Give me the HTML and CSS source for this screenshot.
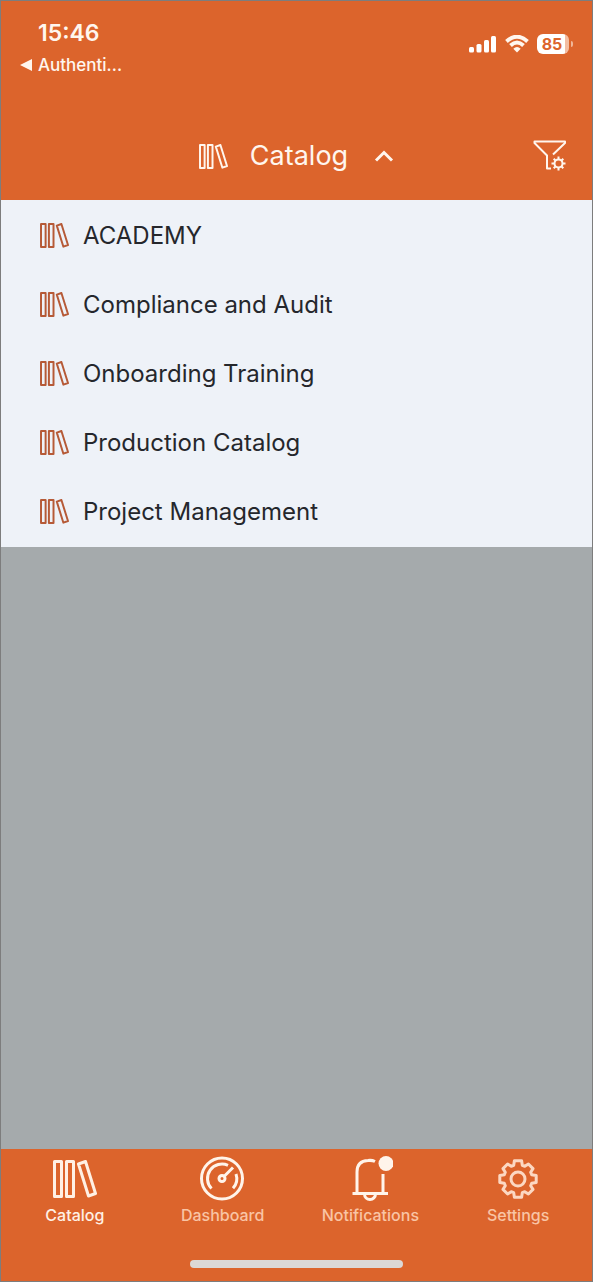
FILE: index.html
```html
<!DOCTYPE html>
<html lang="en">
<head>
<meta charset="utf-8">
<meta name="viewport" content="width=device-width, initial-scale=1">
<title>Catalog</title>
<link rel="stylesheet" href="styles.css">
</head>
<body>
<svg class="sprite" aria-hidden="true">
  <symbol id="books" viewBox="0 0 44 38">
    <path d="M1.500 1.500h7v35h-7zM13.500 1.500h7v35h-7zM25.500 4L32.500 1.500L42.500 33.500L35.500 36z"/>
  </symbol>
  <symbol id="gear" viewBox="0 0 40 40">
    <path d="M16.400 1.800H23.600L24.300 6.300L26.800 7.300L30.400 5L35 9.600L32.700 13.200L33.700 15.700L38.200 16.400V23.600L33.700 24.300L32.700 26.800L35 30.400L30.400 35L26.800 32.700L24.300 33.700L23.600 38.200H16.400L15.700 33.700L13.200 32.700L9.600 35L5 30.400L7.300 26.800L6.300 24.300L1.800 23.600V16.400L6.300 15.700L7.300 13.200L5 9.600L9.600 5L13.200 7.300L15.700 6.300Z"/>
    <circle cx="20" cy="20" r="7"/>
  </symbol>
</svg>
<div class="app">
  <header class="header">
    <div class="status">
      <div class="status-left">
        <time class="clock">15:46</time>
        <a class="back" href="#"><svg class="back-arrow" viewBox="0 0 12 12" aria-hidden="true"><path d="M0 6L12 0V12Z"/></svg>Authenti...</a>
      </div>
      <div class="status-right">
        <svg class="signal" viewBox="0 0 28 18" role="img" aria-label="Signal">
          <rect x="0" y="12" width="5" height="5.500" rx="1.500"/><rect x="7.500" y="9" width="5" height="8.500" rx="1.500"/><rect x="15" y="5" width="5" height="12.500" rx="1.500"/><rect x="22" y="1" width="5" height="16.500" rx="1.500"/>
        </svg>
        <svg class="wifi" viewBox="0 0 24 18" role="img" aria-label="Wi-Fi">
          <path d="M1.500 6.500Q12 -3 22.500 6.500M5.500 10.500Q12 4.500 18.500 10.500"/><path class="solid" d="M8.300 13.700Q12 10.300 15.700 13.700L12 17.500Z"/>
        </svg>
        <div class="battery"><span class="battery-level">85</span></div>
      </div>
    </div>
    <div class="titlebar">
      <button class="title" type="button" aria-expanded="true" aria-controls="catalogs">
        <svg class="icon" aria-hidden="true"><use href="#books"/></svg>
        <span>Catalog</span>
        <svg class="chevron" viewBox="0 0 20 14" aria-hidden="true"><path d="M2 11.500L10 3.500L18 11.500"/></svg>
      </button>
      <button class="filter" type="button" aria-label="Filter settings">
        <svg class="funnel" viewBox="0 0 34 32" aria-hidden="true">
          <path d="M18 28.500H14V15.500L1.500 3V1.500H32V3L20 14.500"/>
          <circle cx="25.500" cy="23.500" r="4"/>
          <path d="M25.500 19.500V16.500M25.500 27.500V30.500M21.500 23.500H18.500M29.500 23.500H32.500M22.700 20.700L20.700 18.700M28.300 20.700L30.300 18.700M22.700 26.300L20.700 28.300M28.300 26.300L30.300 28.300"/>
        </svg>
      </button>
    </div>
  </header>
  <ul class="catalogs" id="catalogs">
    <li><button class="catalog" type="button"><svg class="icon" aria-hidden="true"><use href="#books"/></svg>ACADEMY</button></li>
    <li><button class="catalog" type="button"><svg class="icon" aria-hidden="true"><use href="#books"/></svg>Compliance and Audit</button></li>
    <li><button class="catalog" type="button"><svg class="icon" aria-hidden="true"><use href="#books"/></svg>Onboarding Training</button></li>
    <li><button class="catalog" type="button"><svg class="icon" aria-hidden="true"><use href="#books"/></svg>Production Catalog</button></li>
    <li><button class="catalog" type="button"><svg class="icon" aria-hidden="true"><use href="#books"/></svg>Project Management</button></li>
  </ul>
  <main class="backdrop"></main>
  <footer class="footer">
    <nav class="tabs">
      <a class="tab active" href="#" aria-current="page"><svg class="tab-icon tab-books" aria-hidden="true"><use href="#books"/></svg>Catalog</a>
      <a class="tab" href="#"><svg class="tab-icon bright" viewBox="0 0 46 46" aria-hidden="true"><circle cx="22" cy="22.500" r="20.500"/><path d="M11.500 32.500A14.500 14.500 0 0 1 28 9.300M36 18A14.500 14.500 0 0 1 33 32.300M24.500 20L33 11.500"/><circle cx="22" cy="22.500" r="3"/></svg>Dashboard</a>
      <a class="tab" href="#"><svg class="tab-icon bright" viewBox="0 0 46 46" aria-hidden="true"><path d="M10 37.500V16Q10 5 21 4.500Q25 4 28 5.500M36 18V37.500M5.500 37.500H41M17.500 38A5.500 5.500 0 0 0 28.500 38"/><circle class="solid" cx="39" cy="7.500" r="7.500"/></svg>Notifications</a>
      <a class="tab" href="#"><svg class="tab-icon tab-gear" aria-hidden="true"><use href="#gear"/></svg>Settings</a>
    </nav>
    <div class="home-bar"></div>
  </footer>
</div>
</body>
</html>
```
FILE: styles.css
```css
* { box-sizing: border-box; }

body {
  margin: 0;
  font-family: Inter, "Liberation Sans", sans-serif;
}

button {
  border: 0;
  padding: 0;
  background: none;
  color: inherit;
  font: inherit;
  cursor: pointer;
}

a { color: inherit; text-decoration: none; }

svg {
  display: block;
  flex: none;
  fill: none;
  stroke: currentColor;
  stroke-linejoin: round;
}

.sprite { position: absolute; width: 0; height: 0; }

.app {
  display: flex;
  flex-direction: column;
  min-height: 100vh;
  border: 1px solid #7d7d7d;
}

.header {
  padding-top: 18px;
  background: #dc642c;
  color: #fff6ee;
}

.status {
  display: flex;
  justify-content: space-between;
  align-items: flex-start;
  padding: 0 19px;
}

.clock {
  display: block;
  padding-left: 18px;
  font-size: 23px;
  font-weight: 600;
  line-height: 28px;
}

.back {
  display: flex;
  align-items: center;
  gap: 6px;
  padding-top: 5px;
  font-size: 17px;
  font-weight: 500;
  line-height: 26px;
}

.back-arrow { width: 12px; height: 12px; fill: currentColor; stroke: none; }

.status-right {
  display: flex;
  align-items: center;
  gap: 8px;
  padding-top: 15px;
}

.signal { width: 28px; height: 18px; fill: #fff; stroke: none; }
.wifi { width: 24px; height: 18px; stroke-width: 4; }
.solid { fill: currentColor; stroke: none; }

.battery {
  display: flex;
  align-items: center;
  gap: 2px;
}

.battery::after {
  content: "";
  width: 2px;
  height: 6px;
  border-radius: 0 2px 2px 0;
  background: #f0b799;
}

.battery-level {
  width: 32px;
  padding-right: 2px;
  border-radius: 6px;
  background: linear-gradient(to right, #fff 86%, #f3bda4 86%);
  color: #dc642c;
  font-size: 16px;
  font-weight: 700;
  line-height: 20px;
  text-align: center;
}

.titlebar {
  display: grid;
  grid-template-columns: 1fr auto 1fr;
  align-items: center;
  padding: 55px 25px 21px;
}

.title {
  display: flex;
  grid-column: 2;
  align-items: center;
  gap: 22px;
  font-size: 27px;
  line-height: 46px;
}

.icon {
  width: 29px;
  height: 25px;
  stroke-width: 3;
}

.chevron { width: 20px; height: 14px; margin-left: 4px; stroke-width: 3; stroke-linejoin: miter; }

.filter { justify-self: end; }
.funnel { width: 34px; height: 32px; stroke-width: 2; }

.catalogs {
  display: grid;
  margin: 0;
  padding: 1px 0;
  list-style: none;
  background: #eef2f8;
}

.catalog {
  display: flex;
  align-items: center;
  gap: 14px;
  width: 100%;
  padding: 0 39px;
  color: #25272c;
  font-size: 24px;
  line-height: 69px;
  text-align: left;
}

.catalog .icon { color: #b65a37; }

.backdrop { flex: 1; background: #a5aaac; }

.footer {
  padding: 7px 0 13px;
  background: #dc642c;
}

.tabs { display: grid; grid-template-columns: repeat(4, 1fr); }

.tab {
  display: flex;
  flex-direction: column;
  align-items: center;
  color: #f9c4a5;
  font-size: 16px;
  font-weight: 500;
  line-height: 26px;
}

.active { color: #fff0e4; }

.tab-icon { width: 46px; height: 46px; stroke-width: 3; }
.tab-books { width: 44px; height: 38px; margin: 4px 0; }
.tab-gear { width: 40px; height: 40px; margin: 3px 0; color: #fcd8c2; }
.bright { color: #fff4ea; }

.home-bar {
  width: 36%;
  height: 8px;
  margin: 32px auto 0;
  border-radius: 4px;
  background: #dcd8d6;
}
```
